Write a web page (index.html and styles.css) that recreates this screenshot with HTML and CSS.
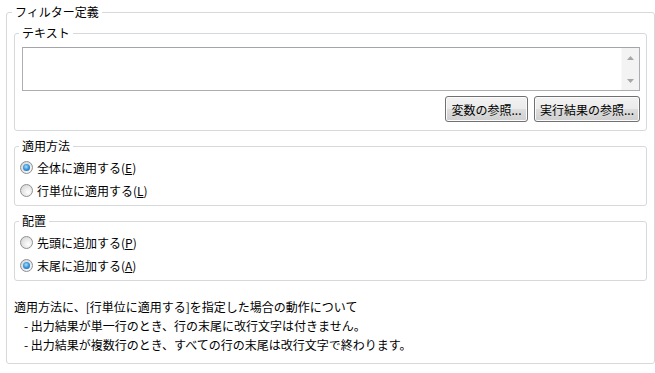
FILE: index.html
```html
<!DOCTYPE html>
<html lang="ja">
<head>
<meta charset="utf-8">
<title>フィルター定義</title>
<link rel="stylesheet" href="styles.css">
</head>
<body>
<fieldset class="group outer">
  <legend class="legend legend-outer">フィルター定義</legend>

  <fieldset class="group text-group">
    <legend class="legend legend-text">テキスト</legend>
    <div class="textbox">
      <div class="textbox-body"></div>
      <div class="scrollbar">
        <div class="scroll-btn">
          <svg width="7" height="4" viewBox="0 0 7 4"><path d="M3.5 0 L7 4 L0 4 Z" fill="#a7a7a7"/></svg>
        </div>
        <div class="scroll-btn">
          <svg width="7" height="4" viewBox="0 0 7 4"><path d="M0 0 L7 0 L3.5 4 Z" fill="#a7a7a7"/></svg>
        </div>
      </div>
    </div>
    <div class="button-row">
      <button class="btn btn-var">変数の参照...</button>
      <button class="btn btn-result">実行結果の参照...</button>
    </div>
  </fieldset>

  <fieldset class="group radio-group">
    <legend class="legend legend-radio">適用方法</legend>
    <label class="radio-row"><span class="radio checked"></span>全体に適用する(<u>E</u>)</label>
    <label class="radio-row"><span class="radio"></span>行単位に適用する(<u>L</u>)</label>
  </fieldset>

  <fieldset class="group radio-group">
    <legend class="legend legend-radio">配置</legend>
    <label class="radio-row"><span class="radio"></span>先頭に追加する(<u>P</u>)</label>
    <label class="radio-row"><span class="radio checked"></span>末尾に追加する(<u>A</u>)</label>
  </fieldset>

  <div class="note">
    <p class="note-title">適用方法に、[行単位に適用する]を指定した場合の動作について</p>
    <p class="note-item">- 出力結果が単一行のとき、行の末尾に改行文字は付きません。</p>
    <p class="note-item">- 出力結果が複数行のとき、すべての行の末尾は改行文字で終わります。</p>
  </div>
</fieldset>
</body>
</html>
```

FILE: styles.css
```css
html, body {
  margin: 0;
  padding: 0;
  background: #ffffff;
}

body {
  font-family: "Noto Sans CJK JP", "Noto Sans", sans-serif;
  font-size: 12px;
  color: #000000;
}

.group {
  margin: 0;
  min-width: 0;
  border: 1px solid #d5d9dc;
  border-radius: 3px;
  box-sizing: border-box;
}

.legend {
  padding: 0 3px;
  height: 16px;
  line-height: 16px;
}

.outer {
  margin: 4px 0 0 6px;
  width: 649px;
  padding: 5px 7px 9px 7px;
}

.legend-outer {
  margin-left: -2px;
}

.text-group {
  padding: 6px 6px 8px 7px;
}

.legend-text {
  margin-left: -3px;
}

.textbox {
  display: flex;
  height: 44px;
  box-sizing: border-box;
  border: 1px solid #abadb3;
  border-top-color: #a3a5ab;
  background: #ffffff;
}

.textbox-body {
  flex: 1;
}

.scrollbar {
  width: 17px;
  display: flex;
  flex-direction: column;
  justify-content: space-between;
  background: #f3f3f3;
  border-left: 1px solid #f8f8f8;
}

.scroll-btn {
  height: 19px;
  display: flex;
  align-items: center;
  justify-content: center;
}

.scroll-btn svg {
  display: block;
}

.button-row {
  display: flex;
  justify-content: flex-end;
  gap: 6px;
  margin-top: 5px;
}

.btn {
  height: 26px;
  box-sizing: border-box;
  padding: 0;
  font-family: inherit;
  font-size: 12px;
  color: #000000;
  border: 1px solid #707070;
  border-radius: 3px;
  background: linear-gradient(#f2f2f2 0%, #ebebeb 48%, #dddddd 52%, #cfcfcf 100%);
  box-shadow: inset 0 0 0 1px #fbfbfb;
}

.btn-var {
  width: 83px;
}

.btn-result {
  width: 106px;
}

.radio-group {
  margin-top: 7px;
  padding: 2px 6px 3px 5px;
}

.legend-radio {
  margin-left: -1px;
}

.radio-row {
  display: flex;
  align-items: center;
  height: 23px;
}

.radio {
  width: 13px;
  height: 13px;
  box-sizing: border-box;
  border-radius: 50%;
  border: 1px solid #8f9091;
  background: radial-gradient(circle at 65% 65%, #ffffff 0%, #eeeeee 35%, #cfcfcf 100%);
  margin-right: 4px;
  display: flex;
  align-items: center;
  justify-content: center;
  flex: none;
}

.radio.checked::after {
  content: "";
  width: 7px;
  height: 7px;
  border-radius: 50%;
  background: radial-gradient(circle at 45% 40%, #a8e3ff 0%, #3d9be0 45%, #114f8f 100%);
}

.note {
  margin-top: 16px;
  line-height: 19px;
}

.note p {
  margin: 0;
}

.note-item {
  padding-left: 10px;
}
```
